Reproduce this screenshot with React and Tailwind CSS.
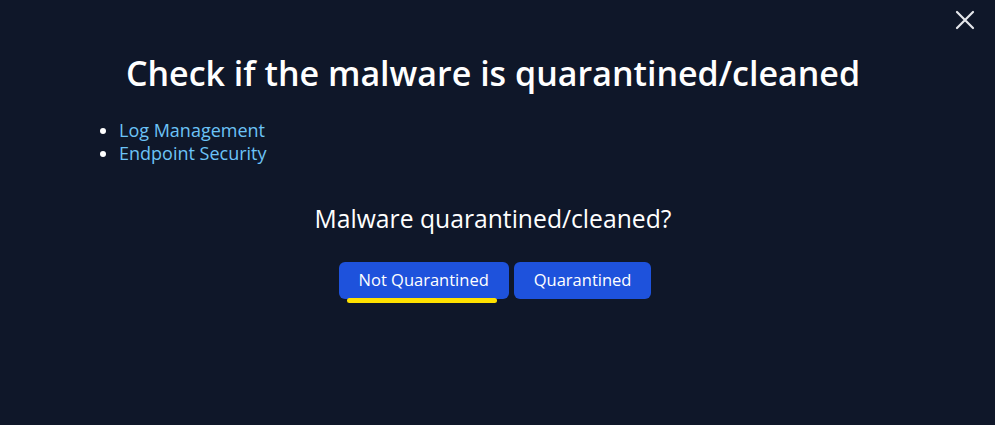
import React from 'react';

function CloseIcon() {
  return (
    <svg width="22" height="22" viewBox="0 0 22 22" fill="none" stroke="currentColor" strokeWidth="2.2" strokeLinecap="round">
      <path d="M3 3 L19 19 M19 3 L3 19" />
    </svg>
  );
}

export default function App() {
  const topics = ["Log Management", "Endpoint Security"];

  return (
    <div
      className="w-[995px] h-[425px] bg-[#0f1729] text-white flex flex-col"
      style={{ fontFamily: '"Open Sans", "Noto Sans", sans-serif' }}
    >
      {/* Top bar with close */}
      <div className="flex justify-end pr-[19px] pt-[9px] h-[30px]">
        <button className="text-gray-200">
          <CloseIcon />
        </button>
      </div>

      <div className="flex flex-col pr-[9px]">
        <h1 className="text-center text-[34px] font-semibold leading-[44px] mt-[21px]">
          Check if the malware is quarantined/cleaned
        </h1>

        {/* Related topics */}
        <ul className="list-disc pl-[119px] mt-[24px] text-[18px] leading-[23px]">
          {topics.map((t) => (
            <li key={t} className="text-[#6cc3f7] marker:text-white">{t}</li>
          ))}
        </ul>

        <p className="text-center text-[24.7px] leading-[32px] mt-[38px]">
          Malware quarantined/cleaned?
        </p>

        <div className="flex justify-center gap-[5px] mt-[27px] pl-[4px]">
          <div className="relative">
            <button className="h-[37px] px-[20px] rounded-md bg-[#1e52dc] text-[16.5px] text-white">
              Not Quarantined
            </button>
            <div className="absolute left-[8px] right-[12px] bottom-[-4px] h-[5px] rounded-full bg-[#ffe100]" />
          </div>
          <button className="h-[37px] px-[20px] rounded-md bg-[#1e52dc] text-[16.5px] text-white">
            Quarantined
          </button>
        </div>
      </div>
    </div>
  );
}
